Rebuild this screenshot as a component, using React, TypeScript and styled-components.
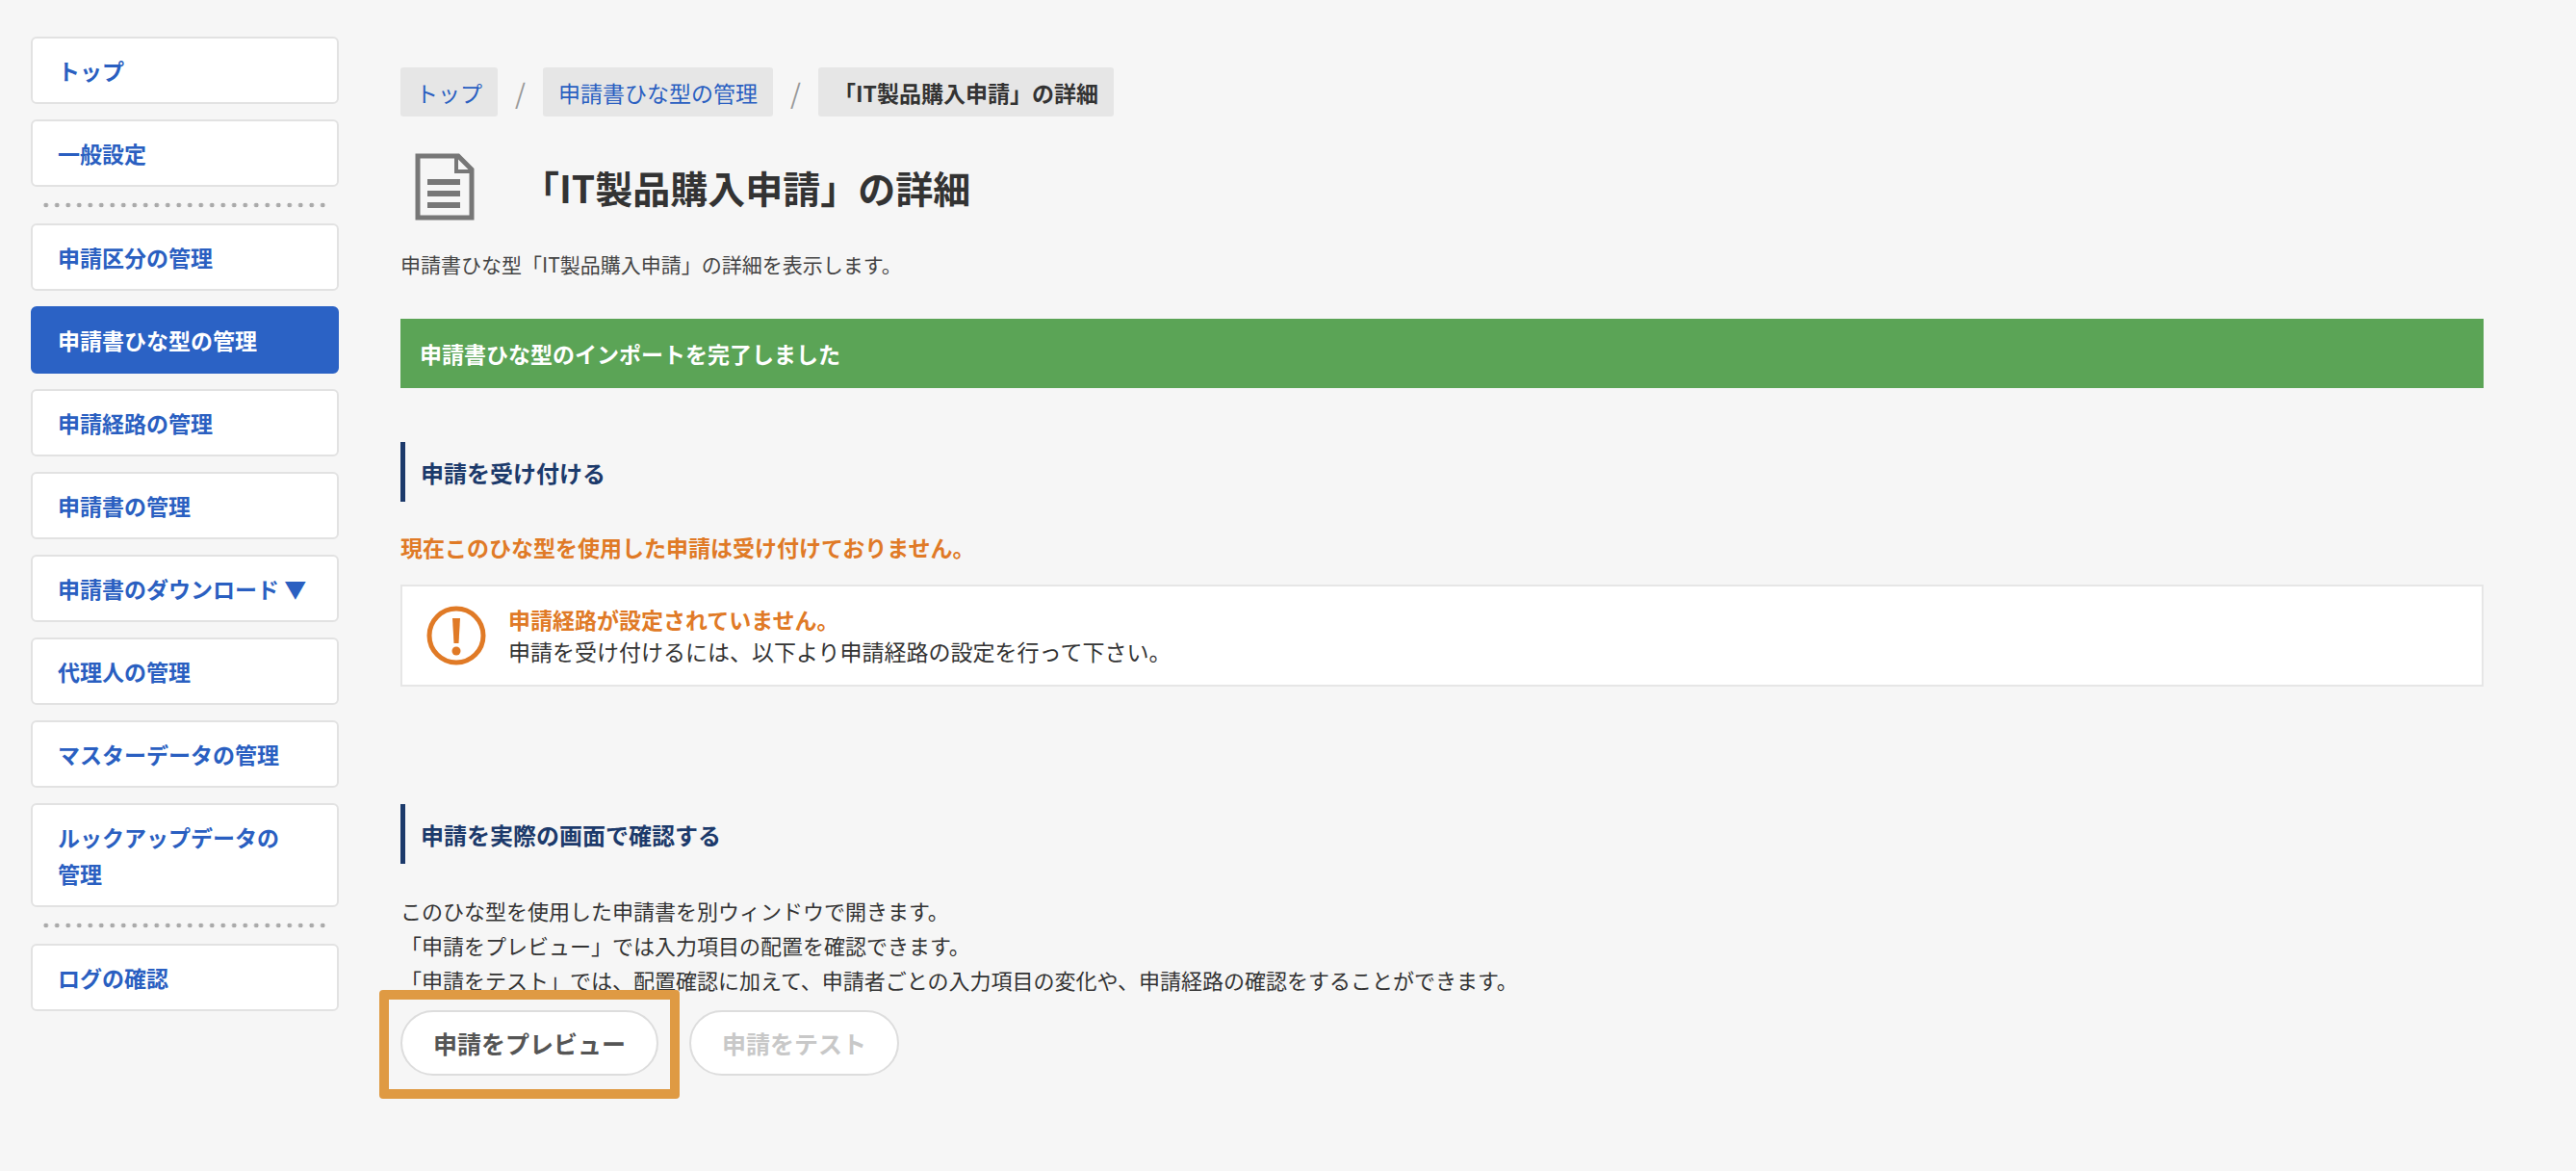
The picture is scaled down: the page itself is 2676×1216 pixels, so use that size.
import React from "react";
import styled, { createGlobalStyle } from "styled-components";

const Global = createGlobalStyle`
  html, body { margin: 0; padding: 0; background: #f6f6f6; }
  body { font-family: "Noto Sans CJK JP", "Noto Sans", sans-serif; color: #333; }
`;

const Page = styled.div`
  display: flex;
  gap: 64px;
  padding: 38px 96px 40px 32px;
  min-height: 1216px;
  box-sizing: border-box;
`;

const Side = styled.nav`
  width: 320px;
  flex-shrink: 0;
  display: flex;
  flex-direction: column;
  gap: 16px;
`;

const NavItem = styled.div<{ $active?: boolean }>`
  min-height: 68px;
  box-sizing: border-box;
  padding: 14px 26px;
  display: flex;
  align-items: center;
  border-radius: 6px;
  font-size: 23px;
  font-weight: 700;
  line-height: 38px;
  background: ${(p) => (p.$active ? "#2b62c5" : "#fff")};
  color: ${(p) => (p.$active ? "#fff" : "#2a5fc1")};
  border: 2px solid ${(p) => (p.$active ? "#2b62c5" : "#e2e2e2")};
`;

const Dots = styled.div`
  height: 6px;
  margin: 0 10px;
  background-image: radial-gradient(circle, #aaa 2.2px, transparent 2.6px);
  background-size: 11.5px 6px;
  background-repeat: repeat-x;
`;

const Main = styled.main`
  flex: 1;
  padding-top: 32px;
  display: flex;
  flex-direction: column;
`;

const Crumbs = styled.div`
  display: flex;
  align-items: center;
  gap: 18px;
`;

const Crumb = styled.div<{ $current?: boolean }>`
  height: 51px;
  display: flex;
  align-items: center;
  padding: 0 16px;
  background: #e6e6e6;
  border-radius: 3px;
  font-size: 23px;
  color: ${(p) => (p.$current ? "#333" : "#2a5fc1")};
  font-weight: ${(p) => (p.$current ? 700 : 400)};
`;

const Sep = styled.span`
  font-size: 28px;
  color: #999;
`;

const TitleRow = styled.div`
  display: flex;
  align-items: center;
  gap: 48px;
  margin-top: 38px;
  padding-left: 14px;
`;

const Title = styled.h1`
  margin: 0;
  font-size: 39px;
  font-weight: 700;
  color: #333;
`;

const Desc = styled.p`
  margin: 30px 0 0;
  font-size: 21px;
  color: #444;
`;

const Success = styled.div`
  margin-top: 42px;
  height: 72px;
  background: #5ba456;
  color: #fff;
  font-size: 23px;
  font-weight: 700;
  display: flex;
  align-items: center;
  padding-left: 20px;
`;

const Heading = styled.h2<{ $top: number }>`
  margin: ${(p) => p.$top}px 0 0;
  border-left: 5px solid #1c3a6b;
  height: 62px;
  display: flex;
  align-items: center;
  padding-left: 16px;
  font-size: 24px;
  font-weight: 700;
  color: #1c3a6b;
`;

const Warn = styled.p`
  margin: 30px 0 0;
  font-size: 23px;
  font-weight: 700;
  color: #e07a26;
`;

const Alert = styled.div`
  margin-top: 22px;
  background: #fff;
  border: 2px solid #e6e6e6;
  height: 106px;
  box-sizing: border-box;
  display: flex;
  align-items: center;
  gap: 22px;
  padding-left: 24px;
`;

const AlertTitle = styled.div`
  font-size: 23px;
  font-weight: 700;
  color: #e07a26;
  line-height: 32px;
`;

const AlertText = styled.div`
  font-size: 23px;
  color: #333;
  line-height: 34px;
`;

const Para = styled.div`
  margin-top: 30px;
  font-size: 22px;
  line-height: 36px;
  color: #333;
`;

const Buttons = styled.div`
  margin-top: 14px;
  display: flex;
  gap: 32px;
`;

const HighlightWrap = styled.div`
  position: relative;
`;

const Highlight = styled.div`
  position: absolute;
  left: -22px;
  top: -21px;
  right: -22px;
  bottom: -24px;
  border: 10px solid #df9a43;
  border-radius: 4px;
  pointer-events: none;
`;

const Btn = styled.button<{ $disabled?: boolean }>`
  height: 68px;
  padding: 0 32px;
  border-radius: 34px;
  background: #fff;
  border: 2px solid #ddd;
  font-family: inherit;
  font-size: 25px;
  font-weight: 700;
  color: ${(p) => (p.$disabled ? "#c8c8c8" : "#555")};
`;

const DocIcon = () => (
  <svg width="64" height="70" viewBox="0 0 64 70">
    <path d="M4 3 H46 L60 17 V67 H4 Z" fill="none" stroke="#777" strokeWidth="5" />
    <path d="M44 3 V19 H60" fill="none" stroke="#777" strokeWidth="4" />
    <rect x="14" y="27" width="34" height="6" fill="#777" />
    <rect x="14" y="39" width="34" height="6" fill="#777" />
    <rect x="14" y="51" width="34" height="6" fill="#777" />
  </svg>
);

const WarnIcon = () => (
  <svg width="64" height="64" viewBox="0 0 64 64">
    <circle cx="32" cy="32" r="28" fill="none" stroke="#e07a26" strokeWidth="5" />
    <path d="M28 14 H36 L34.5 40 H29.5 Z" fill="#e07a26" />
    <circle cx="32" cy="48" r="4.5" fill="#e07a26" />
  </svg>
);

export default function App() {
  return (
    <>
      <Global />
      <Page>
        <Side>
          <NavItem>トップ</NavItem>
          <NavItem>一般設定</NavItem>
          <Dots />
          <NavItem>申請区分の管理</NavItem>
          <NavItem $active>申請書ひな型の管理</NavItem>
          <NavItem>申請経路の管理</NavItem>
          <NavItem>申請書の管理</NavItem>
          <NavItem>申請書のダウンロード ▼</NavItem>
          <NavItem>代理人の管理</NavItem>
          <NavItem>マスターデータの管理</NavItem>
          <NavItem>ルックアップデータの<br />管理</NavItem>
          <Dots />
          <NavItem>ログの確認</NavItem>
        </Side>
        <Main>
          <Crumbs>
            <Crumb>トップ</Crumb>
            <Sep>/</Sep>
            <Crumb>申請書ひな型の管理</Crumb>
            <Sep>/</Sep>
            <Crumb $current>「IT製品購入申請」の詳細</Crumb>
          </Crumbs>
          <TitleRow>
            <DocIcon />
            <Title>「IT製品購入申請」の詳細</Title>
          </TitleRow>
          <Desc>申請書ひな型「IT製品購入申請」の詳細を表示します。</Desc>
          <Success>申請書ひな型のインポートを完了しました</Success>
          <Heading $top={56}>申請を受け付ける</Heading>
          <Warn>現在このひな型を使用した申請は受け付けておりません。</Warn>
          <Alert>
            <WarnIcon />
            <div>
              <AlertTitle>申請経路が設定されていません。</AlertTitle>
              <AlertText>申請を受け付けるには、以下より申請経路の設定を行って下さい。</AlertText>
            </div>
          </Alert>
          <Heading $top={122}>申請を実際の画面で確認する</Heading>
          <Para>
            このひな型を使用した申請書を別ウィンドウで開きます。<br />
            「申請をプレビュー」では入力項目の配置を確認できます。<br />
            「申請をテスト」では、配置確認に加えて、申請者ごとの入力項目の変化や、申請経路の確認をすることができます。
          </Para>
          <Buttons>
            <HighlightWrap>
              <Btn>申請をプレビュー</Btn>
              <Highlight />
            </HighlightWrap>
            <Btn $disabled>申請をテスト</Btn>
          </Buttons>
        </Main>
      </Page>
    </>
  );
}
